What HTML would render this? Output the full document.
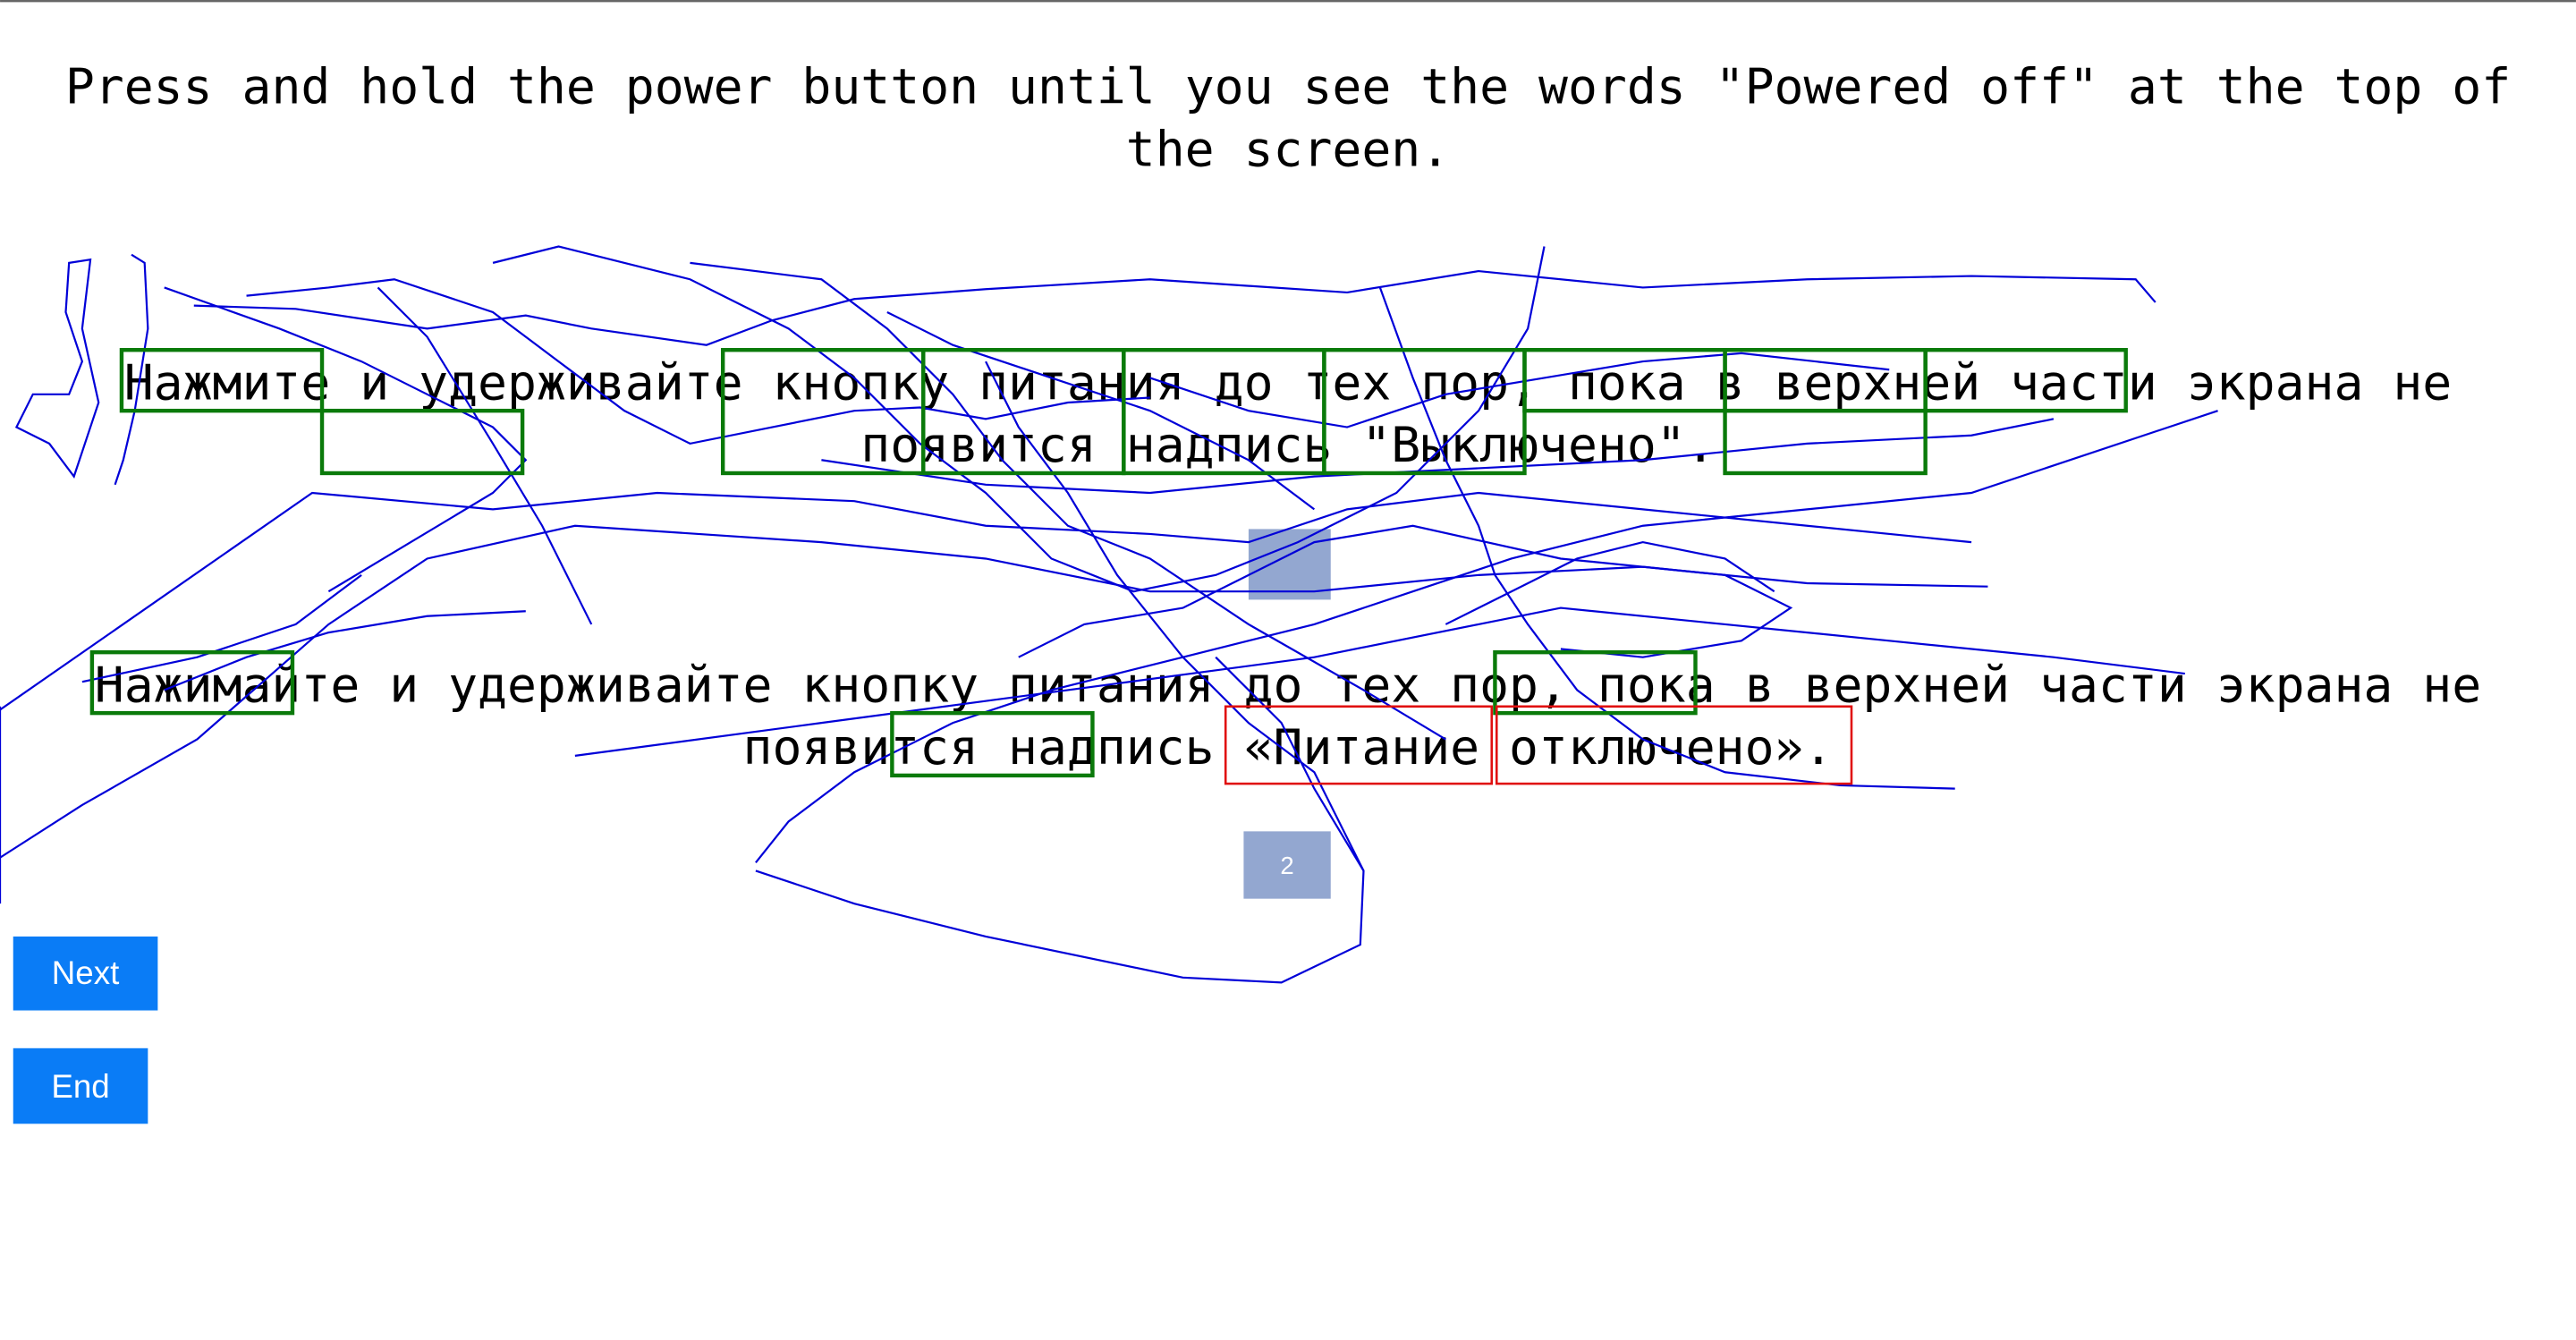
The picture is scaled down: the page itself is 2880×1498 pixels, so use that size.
<!DOCTYPE html>
<html><head><meta charset="utf-8"><style>
html,body{margin:0;padding:0;background:#fff;width:2880px;height:1498px;overflow:hidden}
svg{display:block}
</style></head><body>
<svg width="2880" height="1498" viewBox="0 0 1568 815.6" xmlns="http://www.w3.org/2000/svg">
<rect x="0" y="0" width="1568" height="1.3" fill="#666"/>
<g font-family="'DejaVu Sans Mono','Liberation Mono',monospace" font-size="29.8" fill="#000" text-anchor="middle">
<text x="784" y="63">Press and hold the power button until you see the words "Powered off" at the top of</text>
<text x="784" y="101">the screen.</text>
<text x="784" y="243">Нажмите и удерживайте кнопку питания до тех пор, пока в верхней части экрана не</text>
<text x="784" y="281">появится надпись "Выключено".</text>
<text x="784" y="427">Нажимайте и удерживайте кнопку питания до тех пор, пока в верхней части экрана не</text>
<text x="784" y="465">появится надпись «Питание отключено».</text>
</g>
<rect x="760" y="322" width="50" height="43" fill="#93a7d0"/>
<rect x="757" y="506" width="53" height="41" fill="#93a7d0"/>
<text x="783.5" y="532" font-family="'Liberation Sans',sans-serif" font-size="15" fill="#fff" text-anchor="middle">2</text>
<rect x="8" y="570" width="88" height="45" fill="#0a7cf6"/>
<text x="52" y="599" font-family="'Liberation Sans',sans-serif" font-size="20" fill="#fff" text-anchor="middle">Next</text>
<rect x="8" y="638" width="82" height="46" fill="#0a7cf6"/>
<text x="49" y="668" font-family="'Liberation Sans',sans-serif" font-size="20" fill="#fff" text-anchor="middle">End</text>
<g fill="none" stroke="#0000d8" stroke-width="1.2">
<path d="M42 160 L55 158 L50 200 L60 245 L45 290 L30 270 L10 260 L20 240 L42 240 L50 220 L40 190 Z"/>
<path d="M80 155 L88 160 L90 200 L82 250 L75 280 L70 295"/>
<path d="M118 186 L180 188 L260 200 L320 192 L360 200 L430 210 L470 195 L520 182 L600 176 L700 170 L820 178 L900 165 L1000 175 L1100 170 L1200 168 L1300 170 L1312 184"/>
<path d="M150 180 L200 175 L240 170 L300 190 L340 220 L380 250 L420 270 L470 260 L520 250 L560 248 L600 255 L650 245 L700 242"/>
<path d="M100 175 L170 200 L220 220 L260 240 L300 260 L320 280 L300 300 L250 330 L200 360"/>
<path d="M0 432 L190 300 L300 310 L400 300 L520 305 L600 320 L700 325 L760 330 L820 310 L900 300 L1000 310 L1100 320 L1200 330"/>
<path d="M0 522 L50 490 L120 450 L200 380 L260 340 L350 320 L500 330 L600 340 L700 360 L800 360 L900 350 L1000 345 L1100 355 L1210 357"/>
<path d="M0 430 L0 550"/>
<path d="M230 175 L260 205 L300 270 L330 320 L360 380"/>
<path d="M300 160 L340 150 L420 170 L480 200 L520 230 L560 270 L600 300 L640 340 L690 360 L740 350 L790 330 L850 300 L900 250 L930 200 L940 150"/>
<path d="M420 160 L500 170 L540 200 L580 240 L610 280 L650 320 L700 340 L760 380 L830 420 L880 450"/>
<path d="M350 460 L500 440 L650 420 L800 400 L900 380 L950 370 L1050 380 L1150 390 L1250 400 L1330 410"/>
<path d="M460 525 L480 500 L520 470 L580 440 L640 420 L720 400 L800 380 L860 360 L920 340 L1000 320 L1100 310 L1200 300 L1350 250"/>
<path d="M600 220 L620 260 L650 300 L680 350 L720 400 L760 440 L800 470 L830 530 L828 575 L780 598 L720 595 L600 570 L520 550 L460 530"/>
<path d="M840 175 L860 230 L880 280 L900 320 L910 350 L930 380 L960 420 L1000 450 L1050 470 L1120 478 L1190 480"/>
<path d="M500 280 L600 295 L700 300 L800 290 L900 285 L1000 280 L1100 270 L1200 265 L1250 255"/>
<path d="M700 230 L760 250 L820 260 L880 240 L940 230 L1000 220 L1060 215 L1150 225"/>
<path d="M620 400 L660 380 L720 370 L760 350 L800 330 L860 320 L950 340 L1050 350 L1090 370 L1060 390 L1000 400 L950 395"/>
<path d="M740 400 L780 440 L800 480 L830 530"/>
<path d="M540 190 L580 210 L640 230 L700 250 L760 280 L800 310"/>
<path d="M880 380 L920 360 L960 340 L1000 330 L1050 340 L1080 360"/>
<path d="M100 420 L150 400 L200 385 L260 375 L320 372"/>
<path d="M50 415 L120 400 L180 380 L220 350"/>
</g>
<g fill="none" stroke="#0a7a0a" stroke-width="2.4">
<rect x="74" y="213" width="122" height="37"/>
<rect x="196" y="250" width="122" height="38"/>
<rect x="440" y="213" width="122" height="75"/>
<rect x="562" y="213" width="122" height="75"/>
<rect x="684" y="213" width="122" height="75"/>
<rect x="806" y="213" width="122" height="75"/>
<rect x="928" y="213" width="122" height="37"/>
<rect x="1050" y="250" width="122" height="38"/>
<rect x="1172" y="213" width="122" height="37"/>
<rect x="1050" y="213" width="122" height="37"/>
<rect x="56" y="397" width="122" height="37"/>
<rect x="543" y="434" width="122" height="38"/>
<rect x="910" y="397" width="122" height="37"/>
</g>
<g fill="none" stroke="#e01010" stroke-width="1.4">
<rect x="746" y="430" width="162" height="47"/>
<rect x="911" y="430" width="216" height="47"/>
</g>
</svg>
</body></html>
